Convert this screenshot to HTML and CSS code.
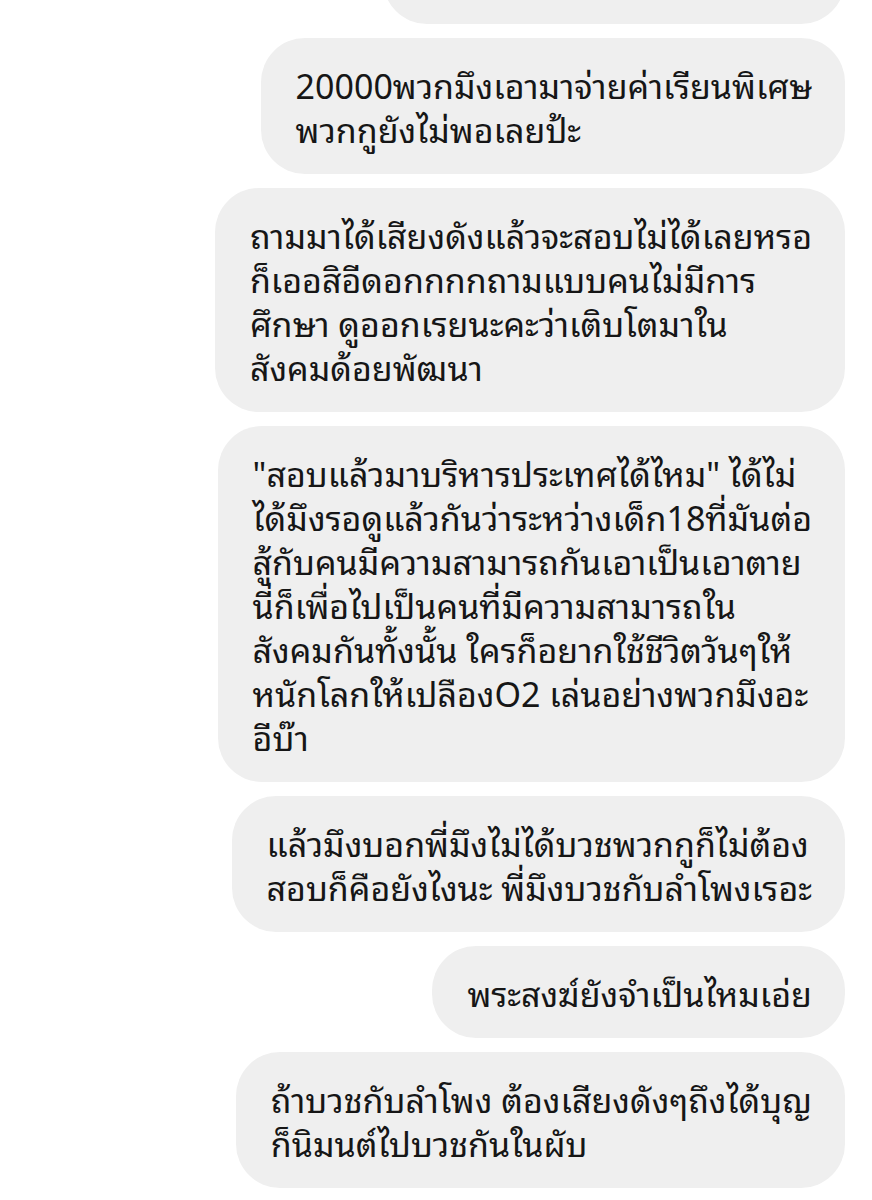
FILE: index.html
```html
<!DOCTYPE html>
<html lang="th">
<head>
<meta charset="utf-8">
<link rel="stylesheet" href="styles.css">
</head>
<body>
<main class="chat">
  <div class="bubble partial"></div>
  <div class="bubble">20000พวกมึงเอามาจ่ายค่าเรียนพิเศษ<br>พวกกูยังไม่พอเลยป้ะ</div>
  <div class="bubble">ถามมาได้เสียงดังแล้วจะสอบไม่ได้เลยหรอ<br>ก็เออสิอีดอกกกกถามแบบคนไม่มีการ<br>ศึกษา ดูออกเรยนะคะว่าเติบโตมาใน<br>สังคมด้อยพัฒนา</div>
  <div class="bubble">"สอบแล้วมาบริหารประเทศได้ไหม" ได้ไม่<br>ได้มึงรอดูแล้วกันว่าระหว่างเด็ก18ที่มันต่อ<br>สู้กับคนมีความสามารถกันเอาเป็นเอาตาย<br>นี่ก็เพื่อไปเป็นคนที่มีความสามารถใน<br>สังคมกันทั้งนั้น ใครก็อยากใช้ชีวิตวันๆให้<br>หนักโลกให้เปลืองO2 เล่นอย่างพวกมึงอะ<br>อีบ๊า</div>
  <div class="bubble">แล้วมึงบอกพี่มึงไม่ได้บวชพวกกูก็ไม่ต้อง<br>สอบก็คือยังไงนะ พี่มึงบวชกับลำโพงเรอะ</div>
  <div class="bubble">พระสงฆ์ยังจำเป็นไหมเอ่ย</div>
  <div class="bubble">ถ้าบวชกับลำโพง ต้องเสียงดังๆถึงได้บุญ<br>ก็นิมนต์ไปบวชกันในผับ</div>
</main>
</body>
</html>
```

FILE: styles.css
```css
html, body {
  margin: 0;
  padding: 0;
  background: #ffffff;
}

body {
  font-family: "Noto Sans Thai Looped", "Noto Sans Thai", "Noto Sans", sans-serif;
  color: #161616;
}

.chat {
  display: flex;
  flex-direction: column;
  align-items: flex-end;
  gap: 14px;
  padding: 0 27px 0 0;
  overflow: hidden;
  height: 1200px;
  box-sizing: border-box;
}

.bubble {
  background: #efefef;
  border-radius: 44px;
  padding: 24px 33px 24px 35px;
  font-size: 34px;
  line-height: 44px;
  white-space: nowrap;
}

.partial {
  width: 462px;
  height: 136px;
  margin-top: -112px;
  padding: 0;
  box-sizing: border-box;
}
```
